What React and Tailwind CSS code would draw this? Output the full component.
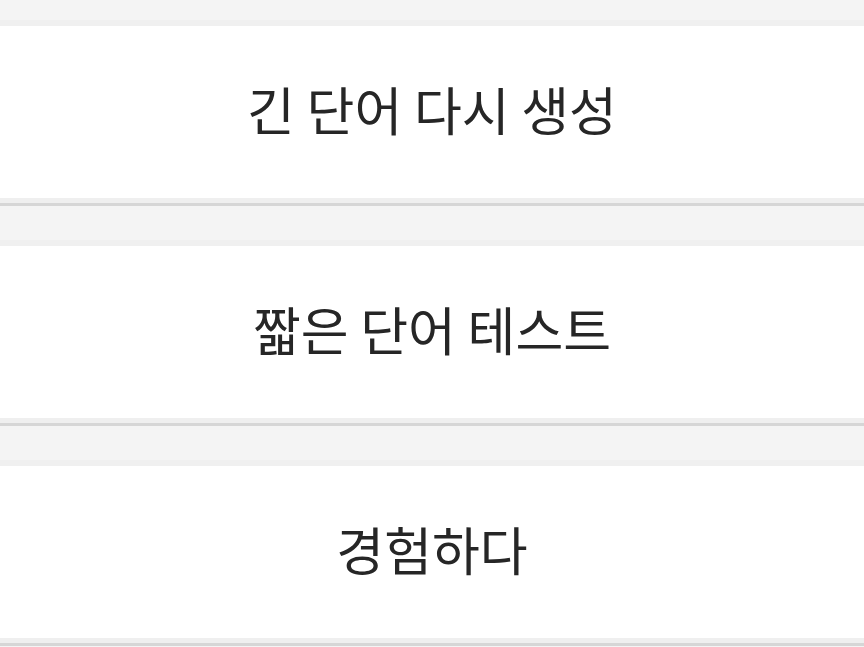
export default function App() {
  const items = ["긴 단어 다시 생성", "짧은 단어 테스트", "경험하다"];
  return (
    <div className="w-[864px] h-[647px] overflow-hidden bg-[#f4f4f4] flex flex-col" style={{ fontFamily: '"Noto Sans CJK KR", "Noto Sans", sans-serif' }}>
      <div className="h-[20px] shrink-0" />
      {items.map((t, i) => (
        <div key={i} className="flex flex-col shrink-0">
          <div className="h-[6px] bg-[#f0f0f0]" />
          <div className="h-[172px] bg-white flex items-center justify-center pb-[6px] text-[52px] font-normal text-[#262626] leading-none">
            {t}
          </div>
          <div className="h-[5px] bg-[#efefef]" />
          <div className="h-[3px] bg-[#d6d6d6]" />
          <div className="h-[34px]" />
        </div>
      ))}
    </div>
  );
}
